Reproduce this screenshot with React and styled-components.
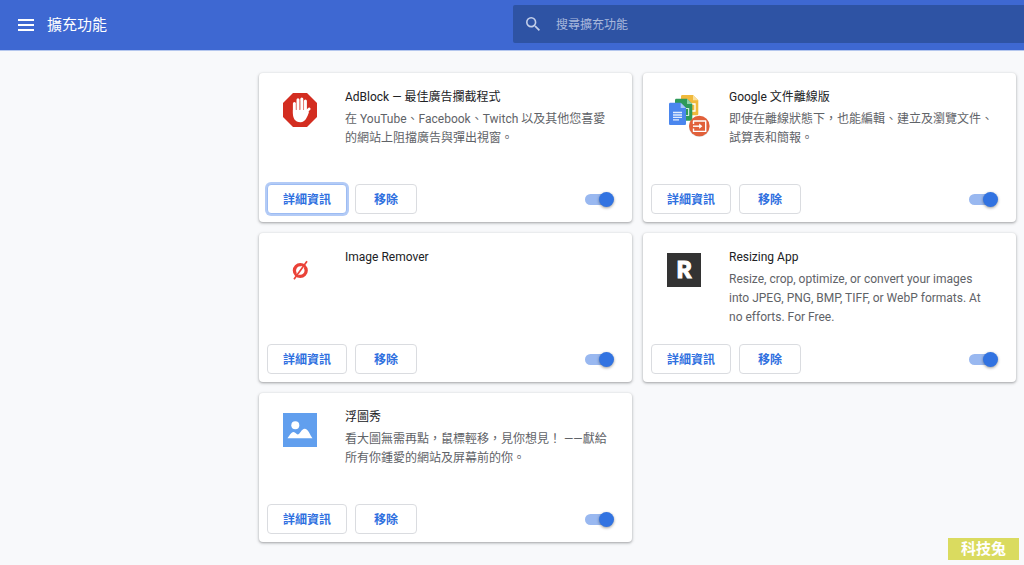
import React, { useState } from 'react'
import styled, { createGlobalStyle } from 'styled-components'

const GlobalStyle = createGlobalStyle`
  * {
    box-sizing: border-box;
  }
  body {
    margin: 0;
    background: #f8f9fb;
    color: #202124;
    font-family: Roboto, "Noto Sans CJK TC", sans-serif;
    font-size: 12px;
    line-height: 19px;
  }
  button, input {
    font: inherit;
  }
`

const Header = styled.header`
  display: grid;
  grid-template-columns: 1fr 1fr;
  column-gap: 2px;
  align-items: center;
  height: 50px;
  padding-bottom: 2px;
  background: #3e68d2;
  box-shadow: 0 1px 0 #b5c7ee;
  color: #fff;
`

const Brand = styled.div`
  display: flex;
  align-items: center;
  gap: 13px;
  padding: 2px 0 0 18px;
`

const MenuButton = styled.button`
  display: flex;
  padding: 0;
  border: 0;
  background: none;
  color: inherit;
  cursor: pointer;
`

const PageTitle = styled.h1`
  margin: 0;
  font-size: 15px;
  font-weight: 400;
  line-height: 22px;
`

const SearchBox = styled.label`
  display: flex;
  align-items: center;
  gap: 16px;
  height: 38px;
  padding-left: 13px;
  border-radius: 2px 0 0 2px;
  background: #2e53a4;
  color: #c3cfea;
`

const SearchInput = styled.input`
  flex: 1;
  min-width: 0;
  padding: 2px 0 0;
  border: 0;
  outline: 0;
  background: none;
  color: #fff;

  &::placeholder {
    color: #a9b8dc;
    opacity: 1;
  }
`

const CardGrid = styled.main`
  display: grid;
  grid-template-columns: repeat(2, minmax(0, 1fr));
  grid-auto-rows: minmax(149px, auto);
  gap: 11px;
  padding: 23px 8px 22px 259px;
`

const Card = styled.article`
  display: flex;
  flex-direction: column;
  justify-content: space-between;
  border-radius: 4px;
  background: #fff;
  box-shadow: 0 1px 2px rgba(60, 64, 67, 0.3), 0 1px 3px 1px rgba(60, 64, 67, 0.15);
`

const CardBody = styled.div`
  display: flex;
  gap: 28px;
  padding: 15px 22px 0 24px;
`

const Logo = styled.svg`
  flex: none;
  width: 34px;
  height: 34px;
  margin-top: 5px;
  overflow: visible;
`

const Name = styled.h2`
  margin: 0 0 3px;
  font-size: 12px;
  font-weight: 400;
  line-height: 19px;
`

const Description = styled.p`
  margin: 0;
  color: #5f6368;
`

const CardActions = styled.div`
  display: flex;
  align-items: center;
  gap: 8px;
  padding: 0 20px 8px 8px;
`

const ActionButton = styled.button`
  min-width: 62px;
  height: 30px;
  padding: 2px 15px 0;
  border: 1px solid ${({ $focused }) => ($focused ? '#9dbcf3' : '#dadce0')};
  border-radius: 4px;
  background: #fff;
  box-shadow: ${({ $focused }) => ($focused ? '0 0 0 2px #b3cbf6' : 'none')};
  color: #2f70e0;
  font-weight: 700;
  cursor: pointer;
`

const Toggle = styled.input`
  appearance: none;
  position: relative;
  width: 26px;
  height: 11px;
  margin: 0 1px 0 auto;
  border-radius: 6px;
  background: #bdc1c6;
  cursor: pointer;

  &::after {
    content: '';
    position: absolute;
    top: -2px;
    left: -2px;
    width: 15px;
    height: 15px;
    border-radius: 50%;
    background: #fff;
    box-shadow: 0 1px 3px rgba(0, 0, 0, 0.4);
  }
  &:checked {
    background: #99b8f0;
  }
  &:checked::after {
    left: 14px;
    background: #3273e1;
  }
`

const Watermark = styled.div`
  position: fixed;
  right: 5px;
  bottom: 5px;
  padding: 0 13px;
  background: #dadb5f;
  color: #fff;
  font-size: 15px;
  font-weight: 700;
  line-height: 22px;
`

const AdBlockLogo = () => (
  <Logo viewBox="0 0 34 34" aria-hidden="true">
    <path d="M10 0h14l10 10v14L24 34H10L0 24V10z" fill="#d32d20" />
    <g stroke="#fff" strokeLinecap="round" fill="none">
      <path d="M11.4 10.6v10M15 6.8v12M18.8 5.9v12M22.4 8v12" strokeWidth="3" />
      <path d="M22.4 21.5c1.5-2.5 2.2-4.6 3.8-5.6" strokeWidth="2.8" />
    </g>
    <path d="M9.9 17h14l2 2.5c-1.5 4-3.5 9.8-8.4 9.8-5.8 0-7.6-4.5-7.6-9z" fill="#fff" />
    <path d="M13.2 11v5.5M16.9 8v8M20.6 9v7.5" stroke="#e88a82" strokeWidth="0.5" />
  </Logo>
)

const DocsLogo = () => (
  <Logo viewBox="0 0 34 34" aria-hidden="true">
    <path d="M15.3 2H26l5.3 5.3V21c0 .7-.6 1.3-1.3 1.3H15.3c-.7 0-1.3-.6-1.3-1.3V3.3C14 2.6 14.6 2 15.3 2z" fill="#f0b93c" />
    <path d="M26 2l5.3 5.3H26z" fill="#fbdf9b" />
    <path d="M24 11h4v7h-4" stroke="#fff" strokeWidth="1.3" fill="none" />
    <path d="M9.3 5.7H20l5.3 5.3v15.4c0 .7-.6 1.3-1.3 1.3H9.3c-.7 0-1.3-.6-1.3-1.3V7c0-.7.6-1.3 1.3-1.3z" fill="#2f9a59" />
    <path d="M20 5.7l5.3 5.3H20z" fill="#8fd0aa" />
    <path d="M18 15.5h3.6v7H18" stroke="#cfe9d9" strokeWidth="1.2" fill="none" />
    <path d="M3.3 9.7h10.4l5.3 5.3v15.7c0 .7-.6 1.3-1.3 1.3H3.3c-.7 0-1.3-.6-1.3-1.3V11c0-.7.6-1.3 1.3-1.3z" fill="#4a86ee" />
    <path d="M13.7 9.7L19 15h-5.3z" fill="#a8c6fa" />
    <path d="M6 19.5h9M6 22h9M6 24.4h9M6 26.8h6" stroke="#e3edfd" strokeWidth="1.3" />
    <circle cx="32.3" cy="33.7" r="10.3" fill="#000" opacity="0.15" />
    <circle cx="32.3" cy="33" r="10.3" fill="#e1603a" />
    <path d="M26.5 31v-3h12.2v10.4H26.5v-3" stroke="#fff" strokeWidth="1.4" strokeLinejoin="round" fill="none" />
    <path d="M26 33.2h7" stroke="#fff" strokeWidth="1.4" />
    <path d="M32.2 30.6l3.2 2.6-3.2 2.6z" fill="#fff" />
  </Logo>
)

const RemoverLogo = () => (
  <Logo viewBox="0 0 34 34" aria-hidden="true">
    <circle cx="17.3" cy="17.5" r="5.9" stroke="#ea4238" strokeWidth="3.3" fill="none" />
    <path d="M14.6 21.4L20.1 13.7" stroke="#fff" strokeWidth="3" />
    <path d="M11 26.3L24 8.3" stroke="#ea4238" strokeWidth="1.7" />
  </Logo>
)

const ResizingLogo = () => (
  <Logo viewBox="0 0 34 34" aria-hidden="true">
    <rect width="34" height="34" fill="#333" />
    <text
      x="17"
      y="25"
      textAnchor="middle"
      fontFamily="Liberation Mono, monospace"
      fontWeight="700"
      fontSize="25"
      fill="#fff"
      stroke="#fff"
      strokeWidth="1"
    >
      R
    </text>
  </Logo>
)

const PhotoLogo = () => (
  <Logo viewBox="0 0 34 34" aria-hidden="true">
    <rect width="34" height="34" fill="#619fee" />
    <circle cx="12.3" cy="12.2" r="4" fill="#fff" />
    <path d="M4.5 25.2c2-2.2 3.4-6.2 6-6.2 2.1 0 2.8 2.5 4.2 2.5 2 0 3.8-5.8 7-5.8 3.4 0 5 5.8 7.8 9.5z" fill="#fff" />
  </Logo>
)

const MenuIcon = () => (
  <svg width="16" height="12" viewBox="0 0 16 12" fill="currentColor" aria-hidden="true">
    <path d="M0 0h16v2H0zM0 5h16v2H0zM0 10h16v2H0z" />
  </svg>
)

const SearchIcon = () => (
  <svg width="14" height="14" viewBox="3 3 17.5 17.5" fill="currentColor" aria-hidden="true">
    <path d="M15.5 14h-.79l-.28-.27A6.471 6.471 0 0 0 16 9.5 6.5 6.5 0 1 0 9.5 16c1.61 0 3.09-.59 4.23-1.57l.27.28v.79l5 4.99L20.49 19l-4.99-5zm-6 0C7.01 14 5 11.99 5 9.5S7.01 5 9.5 5 14 7.01 14 9.5 11.99 14 9.5 14z" />
  </svg>
)

const extensions = [
  {
    id: 'adblock',
    name: 'AdBlock — 最佳廣告攔截程式',
    description: '在 YouTube、Facebook、Twitch 以及其他您喜愛的網站上阻擋廣告與彈出視窗。',
    Icon: AdBlockLogo,
    focused: true,
  },
  {
    id: 'docs',
    name: 'Google 文件離線版',
    description: '即使在離線狀態下，也能編輯、建立及瀏覽文件、試算表和簡報。',
    Icon: DocsLogo,
  },
  {
    id: 'remover',
    name: 'Image Remover',
    description: '',
    Icon: RemoverLogo,
  },
  {
    id: 'resizing',
    name: 'Resizing App',
    description: 'Resize, crop, optimize, or convert your images into JPEG, PNG, BMP, TIFF, or WebP formats. At no efforts. For Free.',
    Icon: ResizingLogo,
  },
  {
    id: 'photo',
    name: '浮圖秀',
    description: '看大圖無需再點，鼠標輕移，見你想見！ ——獻給所有你鍾愛的網站及屏幕前的你。',
    Icon: PhotoLogo,
  },
]

const ExtensionCard = ({ item }) => {
  const [enabled, setEnabled] = useState(true)
  const { Icon } = item

  return (
    <Card>
      <CardBody>
        <Icon />
        <div>
          <Name id={item.id}>{item.name}</Name>
          {item.description && <Description>{item.description}</Description>}
        </div>
      </CardBody>
      <CardActions>
        <ActionButton type="button" $focused={item.focused}>詳細資訊</ActionButton>
        <ActionButton type="button">移除</ActionButton>
        <Toggle
          type="checkbox"
          role="switch"
          aria-labelledby={item.id}
          checked={enabled}
          onChange={() => setEnabled(!enabled)}
        />
      </CardActions>
    </Card>
  )
}

const App = () => {
  const [query, setQuery] = useState('')
  const shown = extensions.filter((item) => item.name.toLowerCase().includes(query.toLowerCase()))

  return (
    <>
      <GlobalStyle />
      <Header>
        <Brand>
          <MenuButton type="button" aria-label="主選單">
            <MenuIcon />
          </MenuButton>
          <PageTitle>擴充功能</PageTitle>
        </Brand>
        <SearchBox>
          <SearchIcon />
          <SearchInput
            type="search"
            aria-label="搜尋擴充功能"
            placeholder="搜尋擴充功能"
            value={query}
            onChange={(e) => setQuery(e.target.value)}
          />
        </SearchBox>
      </Header>
      <CardGrid>
        {shown.map((item) => (
          <ExtensionCard key={item.id} item={item} />
        ))}
      </CardGrid>
      <Watermark>科技兔</Watermark>
    </>
  )
}

export default App
